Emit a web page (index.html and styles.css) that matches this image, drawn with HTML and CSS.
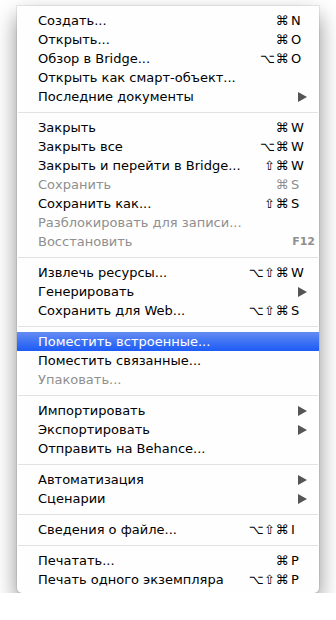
FILE: index.html
```html
<!DOCTYPE html>
<html lang="ru">
<head>
<meta charset="utf-8">
<link rel="stylesheet" href="styles.css">
</head>
<body>
<div class="menu">
  <div class="item"><span class="label">Создать...</span><span class="sc"><span class="mods">⌘</span><span class="key">N</span></span></div>
  <div class="item"><span class="label">Открыть...</span><span class="sc"><span class="mods">⌘</span><span class="key">O</span></span></div>
  <div class="item"><span class="label">Обзор в Bridge...</span><span class="sc"><span class="mods">⌥⌘</span><span class="key">O</span></span></div>
  <div class="item"><span class="label">Открыть как смарт-объект...</span></div>
  <div class="item"><span class="label">Последние документы</span><span class="arrow"></span></div>
  <div class="sep"></div>
  <div class="item"><span class="label">Закрыть</span><span class="sc"><span class="mods">⌘</span><span class="key">W</span></span></div>
  <div class="item"><span class="label">Закрыть все</span><span class="sc"><span class="mods">⌥⌘</span><span class="key">W</span></span></div>
  <div class="item"><span class="label">Закрыть и перейти в Bridge...</span><span class="sc"><span class="mods">⇧⌘</span><span class="key">W</span></span></div>
  <div class="item disabled"><span class="label">Сохранить</span><span class="sc"><span class="mods">⌘</span><span class="key">S</span></span></div>
  <div class="item"><span class="label">Сохранить как...</span><span class="sc"><span class="mods">⇧⌘</span><span class="key">S</span></span></div>
  <div class="item disabled"><span class="label">Разблокировать для записи...</span></div>
  <div class="item disabled"><span class="label">Восстановить</span><span class="fkey">F12</span></div>
  <div class="sep"></div>
  <div class="item"><span class="label">Извлечь ресурсы...</span><span class="sc"><span class="mods">⌥⇧⌘</span><span class="key">W</span></span></div>
  <div class="item"><span class="label">Генерировать</span><span class="arrow"></span></div>
  <div class="item"><span class="label">Сохранить для Web...</span><span class="sc"><span class="mods">⌥⇧⌘</span><span class="key">S</span></span></div>
  <div class="sep"></div>
  <div class="item active"><span class="label">Поместить встроенные...</span></div>
  <div class="item"><span class="label">Поместить связанные...</span></div>
  <div class="item disabled"><span class="label">Упаковать...</span></div>
  <div class="sep"></div>
  <div class="item"><span class="label">Импортировать</span><span class="arrow"></span></div>
  <div class="item"><span class="label">Экспортировать</span><span class="arrow"></span></div>
  <div class="item"><span class="label">Отправить на Behance...</span></div>
  <div class="sep"></div>
  <div class="item"><span class="label">Автоматизация</span><span class="arrow"></span></div>
  <div class="item"><span class="label">Сценарии</span><span class="arrow"></span></div>
  <div class="sep"></div>
  <div class="item"><span class="label">Сведения о файле...</span><span class="sc"><span class="mods">⌥⇧⌘</span><span class="key">I</span></span></div>
  <div class="sep"></div>
  <div class="item"><span class="label">Печатать...</span><span class="sc"><span class="mods">⌘</span><span class="key">P</span></span></div>
  <div class="item"><span class="label">Печать одного экземпляра</span><span class="sc"><span class="mods">⌥⇧⌘</span><span class="key">P</span></span></div>
</div>
</body>
</html>
```

FILE: styles.css
```css
html, body {
  margin: 0;
  padding: 0;
  background: #ffffff;
}

body {
  font-family: "DejaVu Sans", "Liberation Sans", sans-serif;
  font-size: 13px;
  color: #000;
}

.menu {
  margin: 6px 0 0 17px;
  width: 302px;
  padding: 5px 0 4px;
  box-sizing: border-box;
  background: #fefefe;
  border-radius: 0 0 5px 5px;
  box-shadow: 0 0 0 1px rgba(0, 0, 0, 0.07), 0 10px 22px rgba(0, 0, 0, 0.45);
}

.item {
  display: flex;
  align-items: center;
  height: 19px;
  padding: 0 12px 0 21px;
  white-space: nowrap;
}

.label {
  flex: 1;
}

.disabled {
  color: #8f8f8f;
}

.active {
  color: #fff;
  background: linear-gradient(#648cf2, #1c5bf6);
}

.sc {
  display: flex;
  align-items: center;
}

.mods {
  text-align: right;
  letter-spacing: 0.5px;
}

.key {
  width: 16px;
  text-align: left;
  padding-left: 2px;
}

.fkey {
  font-size: 11px;
  font-weight: bold;
  color: #8f8f8f;
  margin-right: -8px;
}

.arrow {
  width: 0;
  height: 0;
  border-top: 5px solid transparent;
  border-bottom: 5px solid transparent;
  border-left: 9px solid #555;
}

.sep {
  height: 12px;
  display: flex;
  align-items: center;
}

.sep::before {
  content: "";
  flex: 1;
  height: 1px;
  margin: 0 1px;
  background: #e2e2e2;
}
```
